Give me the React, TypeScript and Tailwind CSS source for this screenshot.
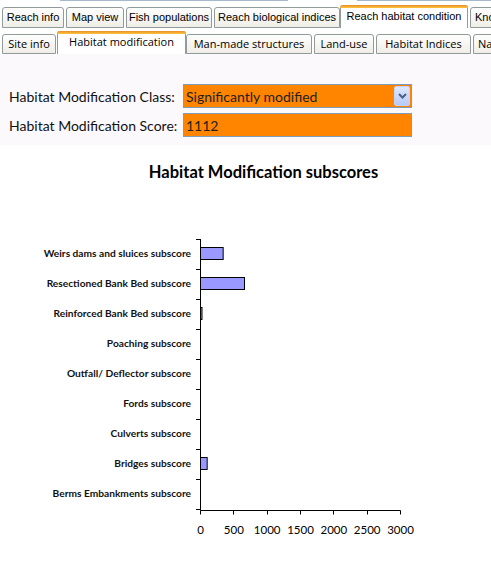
import React from "react";

const row1 = [
  { label: "Reach info", w: 62 },
  { label: "Map view", w: 58 },
  { label: "Fish populations", w: 86 },
  { label: "Reach biological indices", w: 126 },
];

const cats = [
  { label: "Weirs dams and sluices subscore", v: 340 },
  { label: "Resectioned Bank Bed subscore", v: 660 },
  { label: "Reinforced Bank Bed subscore", v: 12 },
  { label: "Poaching subscore", v: 0 },
  { label: "Outfall/ Deflector subscore", v: 0 },
  { label: "Fords subscore", v: 0 },
  { label: "Culverts subscore", v: 0 },
  { label: "Bridges subscore", v: 100 },
  { label: "Berms Embankments subscore", v: 0 },
];

function Chart() {
  const top = 185;
  const axisX = 200.5;
  const y0 = 237 - top;
  const band = 30;
  const axisY = 508.5 - top;
  const scale = 200 / 3000;
  return (
    <svg width={491} height={561 - top} className="block">
      <line x1={axisX} y1={y0} x2={axisX} y2={axisY} stroke="#000" strokeWidth={1} />
      {Array.from({ length: 10 }).map((_, k) => (
        <line key={k} x1={196} y1={y0 + k * band + 0.5} x2={axisX} y2={y0 + k * band + 0.5} stroke="#000" strokeWidth={1} />
      ))}
      <line x1={axisX} y1={axisY} x2={400.5} y2={axisY} stroke="#000" strokeWidth={1} />
      {Array.from({ length: 7 }).map((_, k) => {
        const x = Math.round(200 + k * (200 / 6)) + 0.5;
        return <line key={k} x1={x} y1={axisY} x2={x} y2={axisY + 4} stroke="#000" strokeWidth={1} />;
      })}
      {Array.from({ length: 7 }).map((_, k) => {
        const x = 200.5 + k * (200 / 6);
        return (
          <text key={k} x={x} y={532 - top} textAnchor="middle" fontFamily="Lato, sans-serif" fontSize={11.5} fill="#000">
            {k * 500}
          </text>
        );
      })}
      {cats.map((c, i) => {
        const cy = y0 + i * band + 15;
        const w = Math.max(c.v * scale, 0);
        return (
          <g key={c.label}>
            <text x={191} y={cy + 2.5} textAnchor="end" fontFamily="Lato, sans-serif" fontWeight={700} fontSize={10.2} fill="#111">
              {c.label}
            </text>
            {w > 0 && (
              <rect x={axisX} y={cy - 6.5} width={Math.max(w, 1.5)} height={12} fill="#9999ff" stroke="#000" strokeWidth={1} />
            )}
          </g>
        );
      })}
    </svg>
  );
}

export default function App() {
  return (
    <div className="w-[491px] h-[561px] bg-white overflow-hidden relative" style={{ fontFamily: "'Liberation Sans', Arial, sans-serif" }}>
      <div className="flex h-px">
        <div className="w-[60px]" />
        <div className="w-[228px] bg-[#a6b8cc]" />
        <div className="w-[69px]" />
        <div className="flex-1 bg-[#a6b8cc]" />
      </div>
      {/* Row 1 tabs */}
      <div className="flex items-end h-[27px] pl-[2px] whitespace-nowrap overflow-hidden">
        {row1.map((t, i) => (
          <div
            key={t.label}
            style={{ width: t.w, marginRight: i < row1.length - 1 ? 2 : 0 }}
            className="h-[21px] shrink-0 flex items-center justify-center border border-[#919b9c] rounded-t-[3px] bg-gradient-to-b from-[#fefefe] to-[#efeee6] text-[11px] text-black"
          >
            {t.label}
          </div>
        ))}
        <div className="w-[128px] h-[24px] shrink-0 -mb-px relative flex items-start justify-center pt-[3px] border-x border-[#919b9c] rounded-t-[3px] bg-white text-[11px] text-black">
          <div className="absolute -left-px -right-px top-0 h-[3px] rounded-t-[3px] bg-gradient-to-b from-[#e68b2c] to-[#ffc73c]" />
          <span>Reach habitat condition</span>
        </div>
        <div className="ml-[2px] w-[60px] h-[21px] shrink-0 flex items-center pl-[4px] border border-[#919b9c] rounded-t-[3px] bg-gradient-to-b from-[#fefefe] to-[#efeee6] text-[11px] text-black">
          Know
        </div>
      </div>
      {/* Row 2 tabs */}
      <div className="flex items-end h-[26px] pl-[2px] whitespace-nowrap overflow-hidden" style={{ fontFamily: "'Open Sans', 'DejaVu Sans', sans-serif" }}>
        <div className="w-[54px] h-[20px] shrink-0 flex items-center justify-center border border-[#919b9c] rounded-t-[3px] bg-gradient-to-b from-[#fefefe] to-[#efeee6] text-[11px] text-black">
          Site info
        </div>
        <div className="ml-[1px] w-[129px] h-[23px] shrink-0 relative flex items-start justify-center pt-[3px] border-x border-[#919b9c] rounded-t-[3px] bg-white text-[11px] text-black">
          <div className="absolute -left-px -right-px top-0 h-[3px] rounded-t-[3px] bg-gradient-to-b from-[#e68b2c] to-[#ffc73c]" />
          <span>Habitat modification</span>
        </div>
        <div className="w-[126px] h-[20px] shrink-0 flex items-center justify-center border border-[#919b9c] rounded-t-[3px] bg-gradient-to-b from-[#fefefe] to-[#efeee6] text-[11px] text-black">
          Man-made structures
        </div>
        <div className="ml-[2px] w-[60px] h-[20px] shrink-0 flex items-center justify-center border border-[#919b9c] rounded-t-[3px] bg-gradient-to-b from-[#fefefe] to-[#efeee6] text-[11px] text-black">
          Land-use
        </div>
        <div className="ml-[2px] w-[95px] h-[20px] shrink-0 flex items-center justify-center border border-[#919b9c] rounded-t-[3px] bg-gradient-to-b from-[#fefefe] to-[#efeee6] text-[11px] text-black">
          Habitat Indices
        </div>
        <div className="ml-[2px] w-[60px] h-[20px] shrink-0 flex items-center pl-[4px] border border-[#919b9c] rounded-t-[3px] bg-gradient-to-b from-[#fefefe] to-[#efeee6] text-[11px] text-black">
          Na
        </div>
      </div>
      {/* Form panel */}
      <div className="bg-[#fcf9fc] pt-[30px] pb-[8px] pl-[9px] flex flex-col gap-[5px]" style={{ fontFamily: "Lato, 'Open Sans', sans-serif" }}>
        <div className="flex items-center">
          <div className="w-[174px] text-[14px] text-[#111]">Habitat Modification Class:</div>
          <div className="w-[229px] h-[24px] border border-[#7f9db9] bg-[#ff8400] flex items-center pl-[2px] relative">
            <span className="text-[14px] text-[#222]">Significantly modified</span>
            <div className="absolute right-px top-px bottom-px w-[16px] rounded-[2px] border border-[#c3d3fd] bg-gradient-to-b from-[#dfe8fe] to-[#b7c9f5] flex items-center justify-center">
              <svg width="9" height="6" viewBox="0 0 9 6">
                <path d="M1 1 L4.5 4.5 L8 1" fill="none" stroke="#4d6185" strokeWidth="2" />
              </svg>
            </div>
          </div>
        </div>
        <div className="flex items-center">
          <div className="w-[174px] text-[14px] text-[#111]">Habitat Modification Score:</div>
          <div className="w-[229px] h-[24px] border border-[#7f9db9] bg-[#ff8400] flex items-center pl-[2px]">
            <span className="text-[14px] text-[#222]">1112</span>
          </div>
        </div>
      </div>
      {/* Chart title */}
      <div className="h-[42px] pl-[36px] pt-[17px] text-center font-bold text-[16.5px] text-black leading-[20px]" style={{ fontFamily: "Lato, sans-serif" }}>
        Habitat Modification subscores
      </div>
      <Chart />
    </div>
  );
}
